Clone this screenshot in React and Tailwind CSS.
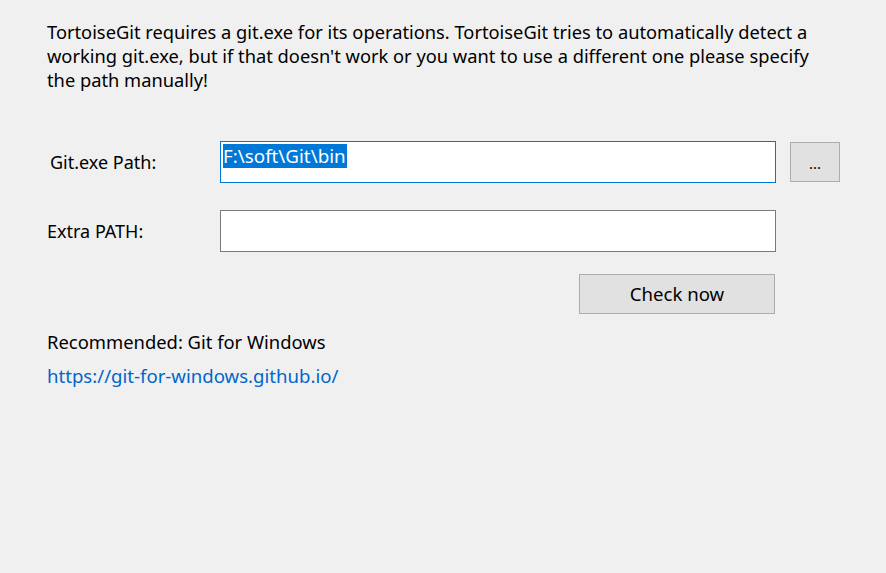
export default function App() {
  return (
    <div
      className="w-[886px] h-[573px] bg-[#f0f0f0] text-black overflow-hidden"
      style={{ fontFamily: '"Noto Sans", "Open Sans", sans-serif' }}
    >
      <div className="pt-[20px] pl-[47px]">
        {/* Intro */}
        <p className="text-[18.3px] leading-[24px] whitespace-nowrap">
          TortoiseGit requires a git.exe for its operations. TortoiseGit tries to automatically detect a
          <br />
          working git.exe, but if that doesn't work or you want to use a different one please specify
          <br />
          the path manually!
        </p>

        {/* Git.exe Path */}
        <div className="flex items-center mt-[49px] h-[42px]">
          <label className="w-[173px] shrink-0 pl-[3px] text-[18px]">Git.exe Path:</label>
          <div className="w-[556px] shrink-0 h-[42px] bg-white border border-[#0078d7] pl-[2px] pt-[2px]">
            <span className="bg-[#0078d7] text-white text-[18.8px] leading-[24px] inline-block pr-[1px]">
              F:\soft\Git\bin
            </span>
          </div>
          <button className="ml-[14px] shrink-0 w-[50px] h-[40px] bg-[#e1e1e1] border border-[#adadad] text-[15px] leading-none pt-[3px]">
            ...
          </button>
        </div>

        {/* Extra PATH */}
        <div className="flex items-center mt-[27px] h-[42px]">
          <label className="w-[173px] shrink-0 text-[18px]">Extra PATH:</label>
          <div className="w-[556px] shrink-0 h-[42px] bg-white border border-[#7a7a7a]"></div>
        </div>

        {/* Check now */}
        <div className="flex mt-[22px]">
          <button className="ml-[532px] w-[196px] h-[40px] bg-[#e1e1e1] border border-[#adadad] text-[18.6px]">
            Check now
          </button>
        </div>

        {/* Recommended */}
        <p className="mt-[16px] text-[18.4px] leading-[24px]">Recommended: Git for Windows</p>
        <a className="block mt-[10px] text-[18.6px] leading-[24px] text-[#0066cc]" href="#">
          https://git-for-windows.github.io/
        </a>
      </div>
    </div>
  );
}
